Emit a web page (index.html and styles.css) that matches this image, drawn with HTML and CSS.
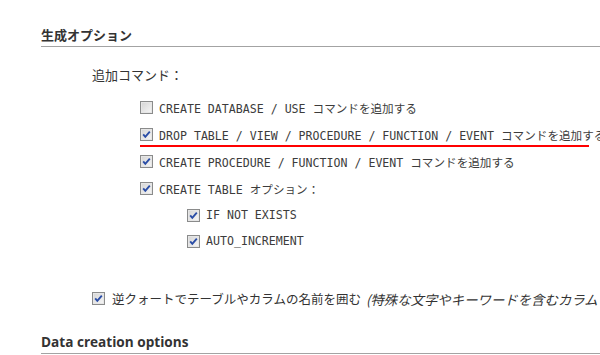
FILE: index.html
```html
<!DOCTYPE html>
<html lang="ja">

<head>
    <meta charset="UTF-8">
    <meta name="viewport" content="width=device-width, initial-scale=1.0">
    <title>エクスポート設定</title>
    <link rel="stylesheet" href="styles.css">
</head>

<body>
    <div class="page">
        <!-- 生成オプション -->
        <section class="group">
            <h2 class="group-title">生成オプション</h2>
            <p class="label">追加コマンド：</p>
            <ul class="opts">
                <li><span class="cb"></span>CREATE DATABASE / USE コマンドを追加する</li>
                <li class="marked"><span class="cb checked"></span>DROP TABLE / VIEW / PROCEDURE / FUNCTION / EVENT コマンドを追加する</li>
                <li><span class="cb checked"></span>CREATE PROCEDURE / FUNCTION / EVENT コマンドを追加する</li>
                <li><span class="cb checked"></span>CREATE TABLE オプション：</li>
            </ul>
            <ul class="opts sub">
                <li><span class="cb checked"></span>IF NOT EXISTS</li>
                <li><span class="cb checked"></span>AUTO_INCREMENT</li>
            </ul>
            <div class="backquote">
                <span class="cb checked"></span>逆クォートでテーブルやカラムの名前を囲む <em>(特殊な文字やキーワードを含むカラムとテーブルの名前を保護します)</em>
            </div>
        </section>

        <section class="group">
            <h2 class="group-title next">Data creation options</h2>
        </section>
    </div>
</body>

</html>
```

FILE: styles.css
```css
* {
    box-sizing: border-box;
}

html,
body {
    overflow: hidden;
}

body {
    margin: 0;
    background: #fff;
    color: #333;
    font-family: "Open Sans", "Noto Sans CJK JP", sans-serif;
}

.page {
    padding-left: 41px;
}

.group-title {
    margin: 0;
    padding-top: 27px;
    padding-bottom: 3px;
    font-size: 13px;
    line-height: 16px;
    font-weight: bold;
    color: #333;
    border-bottom: 1px solid #a3a3a3;
    white-space: nowrap;
}

.group-title.next {
    padding-top: 22px;
    font-size: 13.6px;
}

.label {
    margin: 20px 0 0 51px;
    font-size: 13px;
    line-height: 16px;
    font-family: "Noto Sans CJK JP", sans-serif;
}

.opts {
    margin: 11px 0 0 99px;
    padding: 0;
    list-style: none;
    font-family: "DejaVu Sans Mono", "Noto Sans CJK JP", monospace;
    font-size: 11.6px;
    color: #3c3c3c;
}

.opts li {
    height: 27px;
    display: flex;
    align-items: center;
    white-space: nowrap;
}

.opts.sub {
    margin: 0 0 0 146px;
}

.opts.sub li {
    height: 26px;
}

/* 赤い下線 */
.opts li.marked {
    position: relative;
}

.opts li.marked::after {
    content: "";
    position: absolute;
    left: 0;
    top: 24px;
    width: 449px;
    height: 2px;
    background: #f00;
}

/* チェックボックス */
.cb {
    flex: none;
    width: 13px;
    height: 13px;
    margin-right: 6px;
    border: 1px solid #8a8b8b;
    background: linear-gradient(135deg, #d4d4d4, #f7f7f7);
    box-shadow: inset 0 0 0 1px #e6e6e6;
}

.cb.checked {
    background-image: url("data:image/svg+xml,%3Csvg xmlns='http://www.w3.org/2000/svg' viewBox='0 0 11 11'%3E%3Cpath d='M2.2 5.4 L4.3 7.8 L8.8 2.6' fill='none' stroke='%232a4da6' stroke-width='1.9'/%3E%3C/svg%3E"), linear-gradient(135deg, #d4d4d4, #f7f7f7);
}

.backquote {
    margin: 31px 0 0 51px;
    height: 27px;
    display: flex;
    align-items: center;
    white-space: nowrap;
    font-family: "Noto Sans CJK JP", sans-serif;
    font-size: 12.5px;
}

.backquote .cb {
    margin-right: 7px;
}

.backquote em {
    margin-left: 5px;
    font-style: italic;
    font-size: 13.4px;
}
```
